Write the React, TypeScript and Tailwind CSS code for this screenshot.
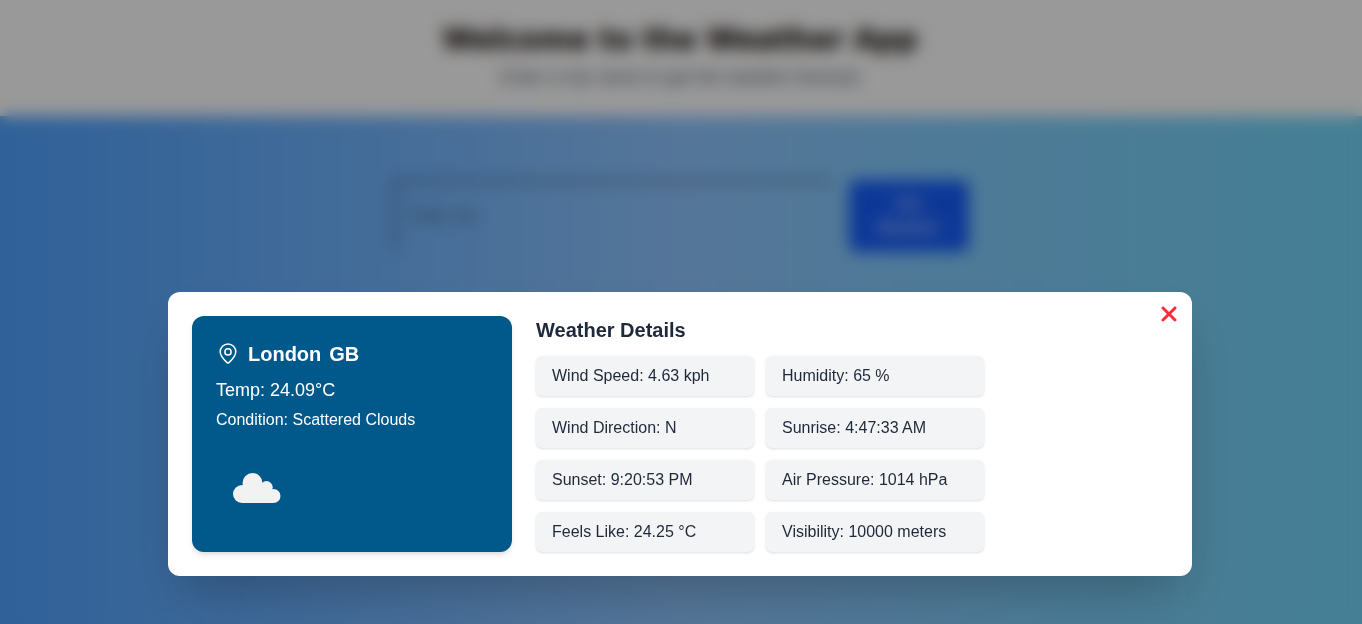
import React from "react";
import { FaXmark } from "react-icons/fa6";

const details = [
  "Wind Speed: 4.63 kph",
  "Humidity: 65 %",
  "Wind Direction: N",
  "Sunrise: 4:47:33 AM",
  "Sunset: 9:20:53 PM",
  "Air Pressure: 1014 hPa",
  "Feels Like: 24.25 °C",
  "Visibility: 10000 meters",
];

function PinIcon() {
  return (
    <svg className="size-6" viewBox="0 0 24 24" fill="none" stroke="currentColor" strokeWidth="1.5" strokeLinecap="round" strokeLinejoin="round">
      <path d="M19.8 9.8c0 4.7-5 9.1-7 10.9a1.2 1.2 0 0 1-1.6 0c-2-1.8-7-6.2-7-10.9a7.8 7.8 0 0 1 15.6 0Z" />
      <circle cx="12" cy="9.9" r="3.1" />
    </svg>
  );
}

function CloudIcon() {
  return (
    <svg className="h-[30px] w-12" viewBox="0 0 48 30" fill="#f2f2f2">
      <circle cx="9" cy="21" r="9" />
      <circle cx="19.5" cy="10" r="10" />
      <circle cx="33.5" cy="14.3" r="6.2" />
      <circle cx="40.5" cy="23" r="7" />
      <path d="M9 30V19l8-8h13l8 8 3 11Z" />
    </svg>
  );
}

export default function App() {
  return (
    <div className="relative h-[624px] overflow-hidden bg-linear-[90deg,#50a2ff,#8ec5ff_50%,#74d4f8_97%] font-['Liberation_Sans',Arial,sans-serif]">
      <header className="flex h-[116px] flex-col items-center bg-white pt-[17px] pr-0.5 text-center">
        <h1 className="font-['DejaVu_Sans',sans-serif] text-[28.8px] leading-[44px] font-extrabold text-[#1c1410] [-webkit-text-stroke:0.7px_#1c1410]">Welcome to the Weather App</h1>
        <p className="mt-[3px] text-lg leading-[26px] text-gray-600">Enter a city name to get the weather forecast</p>
      </header>
      <main className="flex justify-center gap-4 pt-16 pr-px">
        <input className="h-[72px] w-[440px] border-2 border-t-gray-700 border-r-transparent border-b-transparent border-l-gray-700 px-4 placeholder:text-gray-600" placeholder="Enter city" />
        <button className="h-[72px] w-[120px] rounded-lg bg-blue-600 px-5 font-semibold text-white/70">Get Weather</button>
      </main>
      <div className="absolute inset-0 flex items-center justify-center bg-black/40 pt-[244px] pr-0.5 backdrop-blur-sm">
        <section className="relative flex h-[284px] w-[1024px] gap-6 rounded-xl bg-white p-6 shadow-2xl">
          <div className="h-[236px] w-80 rounded-xl bg-sky-800 p-6 text-white shadow-md">
            <h2 className="flex items-center gap-2 text-xl leading-7 font-bold"><PinIcon /><span>London</span><span>GB</span></h2>
            <p className="mt-2 text-lg">Temp: 24.09°C</p>
            <p className="mt-1">Condition: Scattered Clouds</p>
            <div className="mt-[41px] ml-[17px]"><CloudIcon /></div>
          </div>
          <div className="w-[448px]">
            <h2 className="mb-3 text-xl font-bold text-gray-800">Weather Details</h2>
            <div className="grid grid-cols-2 gap-3">
              {details.map((d) => <p key={d} className="rounded-md bg-gray-100 px-4 py-2 text-gray-800 shadow-sm">{d}</p>)}
            </div>
          </div>
          <button className="absolute top-[9.5px] right-[11px] text-2xl text-[#fb2c36]"><FaXmark /></button>
        </section>
      </div>
    </div>
  );
}
